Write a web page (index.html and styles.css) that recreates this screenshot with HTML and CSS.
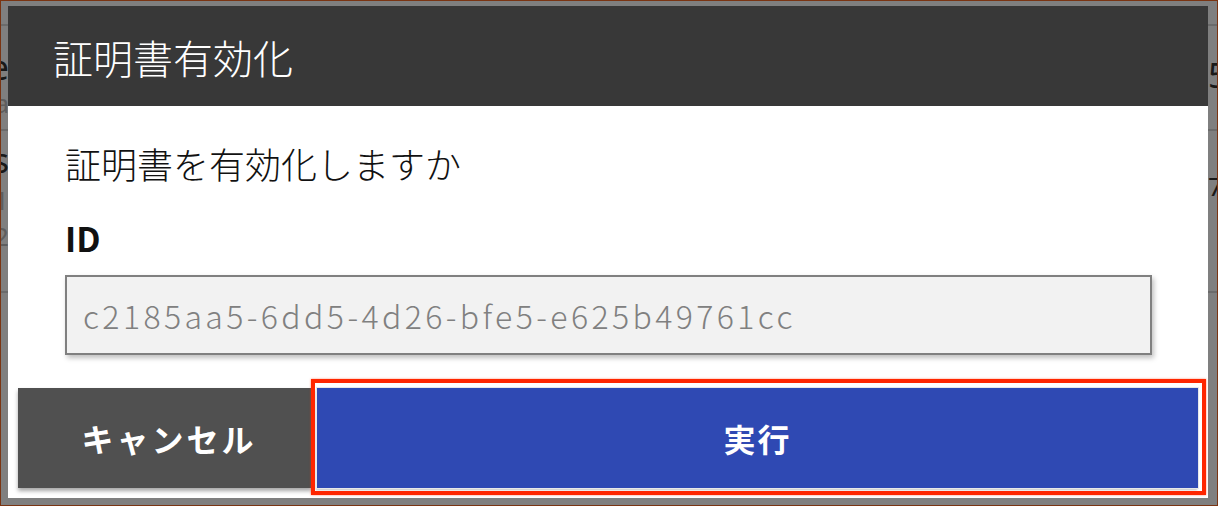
FILE: index.html
```html
<!DOCTYPE html>
<html lang="ja">
<head>
<meta charset="utf-8">
<title>証明書有効化</title>
<link rel="stylesheet" href="styles.css">
</head>
<body>
<div class="frame">
  <div class="bg-page">
    <div class="bg-row bg-row-top"></div>
    <div class="bg-row bg-row-a">
      <div class="bg-cell">
        <span class="bg-big bg-left">Name</span>
        <span class="bg-small bg-left">data</span>
      </div>
      <div class="bg-cell bg-cell-right">
        <span class="bg-big">5</span>
      </div>
    </div>
    <div class="bg-row bg-row-b">
      <div class="bg-cell">
        <span class="bg-big bg-left">Status</span>
        <span class="bg-small bg-left">11</span>
        <span class="bg-small bg-left">22</span>
      </div>
      <div class="bg-cell bg-cell-right">
        <span class="bg-mid">7</span>
      </div>
    </div>
    <div class="bg-row bg-row-c"></div>
  </div>
  <div class="overlay"></div>

  <div class="dialog">
    <div class="dialog-header">証明書有効化</div>
    <div class="dialog-body">
      <p class="message">証明書を有効化しますか</p>
      <div class="field-label">ID</div>
      <div class="field-input">c2185aa5-6dd5-4d26-bfe5-e625b49761cc</div>
    </div>
    <div class="dialog-footer">
      <button class="btn btn-cancel">キャンセル</button>
      <button class="btn btn-run">実行</button>
    </div>
    <div class="highlight"></div>
  </div>
</div>
</body>
</html>
```
FILE: styles.css
```css
* { box-sizing: border-box; }

html, body {
  margin: 0;
  padding: 0;
  width: 1218px;
  height: 506px;
  overflow: hidden;
  font-family: "Noto Sans CJK JP", "Noto Sans", sans-serif;
}

.frame {
  position: relative;
  width: 1218px;
  height: 506px;
  border: 1px solid #7a3412;
  background: #ffffff;
  overflow: hidden;
}

/* background page (under the modal overlay) */
.bg-page {
  display: flex;
  flex-direction: column;
}

.bg-row {
  display: flex;
  justify-content: space-between;
  border-bottom: 2px solid #d6d6d6;
  margin: 0 -60px;
}

.bg-row-top { height: 25px; }
.bg-row-a { height: 105px; }
.bg-row-b { height: 162px; }
.bg-row-c { height: 200px; border-bottom: none; }

.bg-cell {
  display: flex;
  flex-direction: column;
  align-items: flex-end;
  width: 68px;
}

.bg-cell-right {
  align-items: flex-start;
  width: 80px;
}

.bg-big {
  font-family: "Noto Sans", sans-serif;
  font-size: 34px;
  color: #333;
  line-height: 1;
}

.bg-row-a .bg-big { margin-top: 24px; }
.bg-row-a .bg-cell-right .bg-big { margin-top: 32px; margin-left: 11px; }

.bg-small {
  font-family: "Noto Sans", sans-serif;
  font-size: 26px;
  color: #bcbcbc;
  line-height: 1;
}

.bg-row-a .bg-small { margin-top: 6px; }

.bg-row-b .bg-big { margin-top: 12px; }
.bg-row-b .bg-small { margin-top: 10px; }

.bg-mid {
  font-family: "Noto Sans", sans-serif;
  font-size: 26px;
  color: #333;
  margin-top: 42px;
  margin-left: 11px;
  line-height: 1;
}

.overlay {
  position: absolute;
  inset: 0;
  background: rgba(0, 0, 0, 0.5);
}

/* dialog */
.dialog {
  position: absolute;
  left: 7px;
  top: 5px;
  width: 1200px;
  height: 492px;
  background: #ffffff;
  display: flex;
  flex-direction: column;
}

.dialog-header {
  height: 100px;
  flex: none;
  background: #383838;
  color: #ffffff;
  font-size: 40px;
  font-weight: 300;
  display: flex;
  align-items: center;
  padding: 2px 0 0 45px;
}

.dialog-body {
  padding: 26px 56px 0 57px;
  flex: 1;
}

.message {
  margin: 0;
  font-size: 36px;
  font-weight: 300;
  line-height: 62px;
  color: #111;
}

.field-label {
  margin: 16px 0 0 0;
  font-size: 34px;
  font-weight: 700;
  line-height: 56px;
  color: #111;
}

.field-input {
  margin-top: 9px;
  width: 1087px;
  height: 80px;
  border: 2px solid #808080;
  background: #f2f2f2;
  box-shadow: 2px 3px 5px rgba(0, 0, 0, 0.25);
  color: #808080;
  font-size: 32px;
  font-weight: 300;
  letter-spacing: 3.4px;
  display: flex;
  align-items: center;
  padding: 0 0 1px 16px;
}

.dialog-footer {
  display: flex;
  gap: 5px;
  padding: 0 10px 10px 10px;
  height: 110px;
  align-items: flex-end;
}

.btn {
  height: 100px;
  border: none;
  color: #ffffff;
  font-family: "Noto Sans CJK JP", "Noto Sans", sans-serif;
  font-weight: 700;
  font-size: 32px;
  padding: 0;
}

.btn-cancel {
  width: 294px;
  background: #505050;
  letter-spacing: 3px;
  padding-left: 8px;
  box-shadow: 0 3px 4px rgba(0, 0, 0, 0.35);
}

.btn-run {
  flex: 1;
  background: #2f49b3;
  letter-spacing: 2px;
  outline: 1px solid #e8e8e8;
  box-shadow: -1px 2px 2px rgba(0, 0, 0, 0.25);
}

/* annotation box around the run button */
.highlight {
  position: absolute;
  left: 303px;
  top: 373px;
  width: 895px;
  height: 116px;
  border: 4px solid #ff2600;
  box-shadow: 0 0 2px rgba(255, 60, 20, 0.6);
  pointer-events: none;
}
```
